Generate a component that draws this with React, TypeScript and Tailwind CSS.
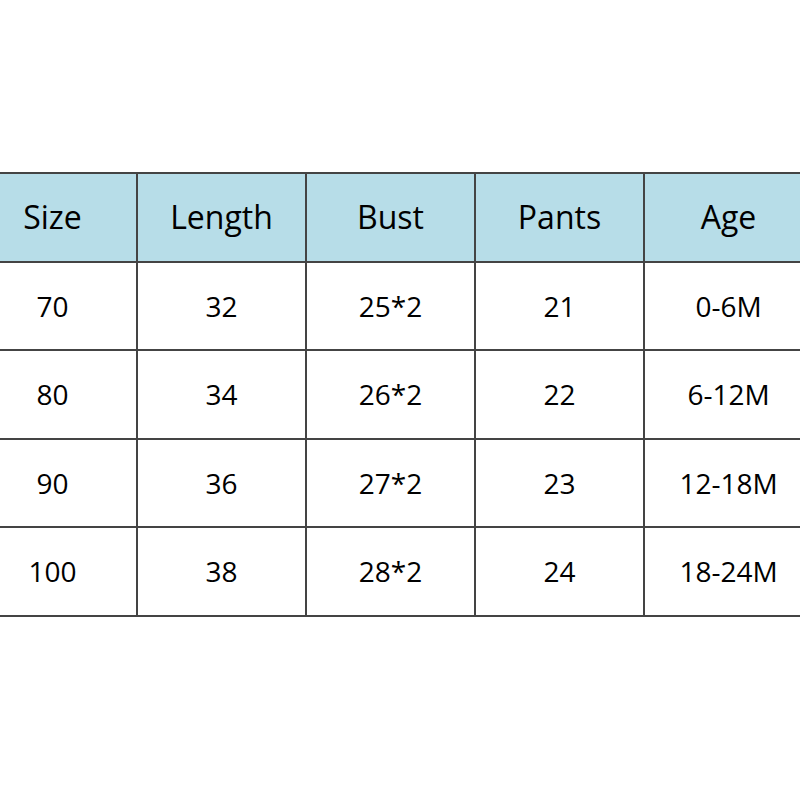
const headers = ["Size", "Length", "Bust", "Pants", "Age"];

const rows = [
  ["70", "32", "25*2", "21", "0-6M"],
  ["80", "34", "26*2", "22", "6-12M"],
  ["90", "36", "27*2", "23", "12-18M"],
  ["100", "38", "28*2", "24", "18-24M"],
];

export default function App() {
  return (
    <div className="w-[800px] h-[800px] bg-white overflow-hidden pt-[172px]" style={{ fontFamily: '"Open Sans", sans-serif' }}>
      <table className="ml-[-33px] w-[847px] border-collapse table-fixed text-black">
        <thead>
          <tr className="bg-[#b7dde8] h-[88.5px]">
            {headers.map((h) => (
              <th key={h} className="border-2 border-[#444] text-[32px] font-medium text-center">
                {h}
              </th>
            ))}
          </tr>
        </thead>
        <tbody>
          {rows.map((r, i) => (
            <tr key={i} className="h-[88.5px]">
              {r.map((c, j) => (
                <td key={j} className="border-2 border-[#444] text-[28px] text-center">
                  {c}
                </td>
              ))}
            </tr>
          ))}
        </tbody>
      </table>
    </div>
  );
}
